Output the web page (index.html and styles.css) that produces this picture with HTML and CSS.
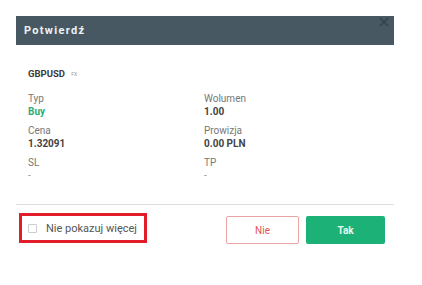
FILE: index.html
```html
<!DOCTYPE html>
<html lang="pl">
<head>
    <meta charset="UTF-8">
    <title>Potwierdź</title>
    <link rel="stylesheet" href="styles.css">
</head>
<body>
    <div class="dialog">
        <div class="dialog-header">
            <span class="dialog-title">Potwierdź</span>
            <button class="close-btn" aria-label="Zamknij">
                <svg width="10" height="10" viewBox="0 0 10 10">
                    <path d="M1 1 L9 9 M9 1 L1 9" stroke="#34434c" stroke-width="1.6"/>
                </svg>
            </button>
        </div>

        <div class="dialog-body">
            <div class="symbol">GBPUSD <span class="symbol-type">FX</span></div>
            <div class="details">
                <div class="field">
                    <div class="label">Typ</div>
                    <div class="value buy">Buy</div>
                </div>
                <div class="field">
                    <div class="label">Wolumen</div>
                    <div class="value">1.00</div>
                </div>
                <div class="field">
                    <div class="label">Cena</div>
                    <div class="value">1.32091</div>
                </div>
                <div class="field">
                    <div class="label">Prowizja</div>
                    <div class="value">0.00 PLN</div>
                </div>
                <div class="field">
                    <div class="label">SL</div>
                    <div class="value dash">-</div>
                </div>
                <div class="field">
                    <div class="label">TP</div>
                    <div class="value dash">-</div>
                </div>
            </div>
        </div>

        <div class="dialog-footer">
            <label class="dont-show">
                <span class="checkbox"></span>
                Nie pokazuj więcej
            </label>
            <div class="actions">
                <button class="btn btn-no">Nie</button>
                <button class="btn btn-yes">Tak</button>
            </div>
        </div>
    </div>
</body>
</html>
```

FILE: styles.css
```css
body {
    margin: 0;
    padding: 16px;
    background: #fff;
    font-family: Roboto, "Liberation Sans", sans-serif;
    color: #333;
}

.dialog {
    width: 378px;
    background: #fff;
    position: relative;
}

.dialog-header {
    height: 29px;
    background: #485862;
    display: flex;
    align-items: center;
    padding-left: 8px;
}

.dialog-title {
    color: #eef2f4;
    font-size: 11px;
    font-weight: bold;
    letter-spacing: 1.3px;
}

.close-btn {
    position: absolute;
    top: 1px;
    right: 5px;
    width: 10px;
    height: 10px;
    padding: 0;
    border: none;
    background: none;
    display: flex;
    align-items: center;
    justify-content: center;
}

.dialog-body {
    padding: 23px 12px 22px;
    border-bottom: 1px solid #dedede;
}

.symbol {
    font-size: 9.5px;
    font-weight: bold;
    line-height: 12px;
    color: #3a3a3a;
}

.symbol-type {
    font-size: 5px;
    font-weight: normal;
    color: #999;
    margin-left: 4px;
    vertical-align: middle;
}

.details {
    display: grid;
    grid-template-columns: 176px 1fr;
    row-gap: 7px;
    margin-top: 13px;
}

.label {
    font-size: 10px;
    line-height: 12px;
    color: #777;
}

.value {
    font-size: 10px;
    line-height: 13px;
    font-weight: bold;
    color: #444;
}

.value.buy {
    color: #1fb07a;
}

.value.dash {
    font-weight: normal;
    color: #999;
}

.dont-show {
    display: flex;
    align-items: center;
    gap: 9px;
    width: 116px;
    height: 24px;
    padding-left: 6px;
    border: 3px solid #e21d2a;
    font-size: 11px;
    color: #555;
}

.checkbox {
    width: 7px;
    height: 7px;
    border: 1px solid #ccc;
    border-radius: 1px;
}

.dialog-footer {
    display: flex;
    align-items: flex-start;
    justify-content: space-between;
    padding: 8px 9px 0 3px;
}

.actions {
    display: flex;
    gap: 7px;
    margin-top: 3px;
}

.btn {
    height: 28px;
    border-radius: 2px;
    font-family: Roboto, "Liberation Sans", sans-serif;
    font-size: 10px;
    cursor: pointer;
}

.btn-no {
    width: 73px;
    background: #fff;
    border: 1px solid #eba3a3;
    color: #e45454;
}

.btn-yes {
    width: 79px;
    background: #1cb277;
    border: none;
    color: #e8f8f0;
    font-weight: bold;
}
```
